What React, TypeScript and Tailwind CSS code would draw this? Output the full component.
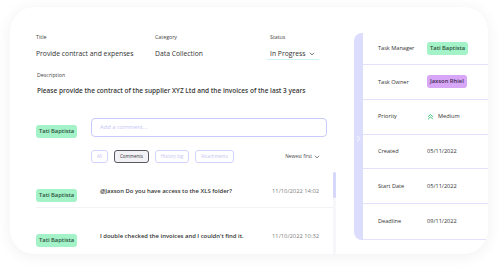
import React from "react";

const Badge = ({ name, tone }: { name: string; tone: "green" | "purple" }) => (
  <span
    className={`inline-flex items-center justify-center h-[13px] px-[3px] rounded-[3px] text-[5.8px] font-semibold whitespace-nowrap ${
      tone === "green" ? "bg-[#a4f2c7] text-[#2d5140]" : "bg-[#d7a6f6] text-[#3f2a52]"
    }`}
  >
    {name}
  </span>
);

const ChevronDown = ({ size = 6, color = "#555" }: { size?: number; color?: string }) => (
  <svg width={size} height={size} viewBox="0 0 10 10" fill="none">
    <polyline points="2,3.5 5,6.5 8,3.5" stroke={color} strokeWidth="1.3" strokeLinecap="round" strokeLinejoin="round" />
  </svg>
);

const comments = [
  { text: "@Jaxson Do you have access to the XLS folder?", date: "11/10/2022 14:02" },
  { text: "I double checked the invoices and I couldn't find it.", date: "11/10/2022 10:32" },
];

const details = [
  { label: "Task Manager", h: "h-[32px]", value: <Badge name="Tati Baptista" tone="green" /> },
  { label: "Task Owner", h: "h-[35px]", value: <Badge name="Jaxson Rhiel" tone="purple" /> },
  {
    label: "Priority",
    h: "h-[35px]",
    value: (
      <span className="flex items-center gap-[4px]">
        <svg width="7" height="7" viewBox="0 0 10 10" fill="none">
          <polyline points="2,5 5,2 8,5" stroke="#35c27a" strokeWidth="1.4" strokeLinecap="round" strokeLinejoin="round" />
          <polyline points="2,8.5 5,5.5 8,8.5" stroke="#35c27a" strokeWidth="1.4" strokeLinecap="round" strokeLinejoin="round" />
        </svg>
        <span>Medium</span>
      </span>
    ),
  },
  { label: "Created", h: "h-[35px]", value: "05/11/2022" },
  { label: "Start Date", h: "h-[35px]", value: "05/11/2022" },
  { label: "Deadline", h: "h-[35px]", value: "09/11/2022" },
];

export default function App() {
  return (
    <div
      className="w-[499px] h-[268px] bg-white pt-[7px] pl-[10px] text-[#333]"
      style={{ fontFamily: "'Open Sans', 'Noto Sans', sans-serif" }}
    >
      <div className="w-[478px] h-[247px] rounded-[24px] bg-white shadow-[0_2px_14px_rgba(60,60,90,0.08)] flex overflow-hidden">
        {/* Left: task info + comments */}
        <div className="w-[344px] pl-[26px] pt-[27px] flex flex-col">
          <div className="flex">
            <div className="w-[119px]">
              <div className="text-[5.3px] leading-[7px] text-[#444]">Title</div>
              <div className="mt-[8px] text-[6.8px] leading-[9px]">Provide contract and expenses</div>
            </div>
            <div className="w-[115px]">
              <div className="text-[5.3px] leading-[7px] text-[#444]">Category</div>
              <div className="mt-[8px] text-[6.8px] leading-[9px]">Data Collection</div>
            </div>
            <div>
              <div className="text-[5.3px] leading-[7px] text-[#444]">Status</div>
              <div className="mt-[8px] -ml-[3px] w-[52px] pl-[3px] pr-[4px] flex items-center justify-between border-b border-[#cdf1f6] pb-[1px]">
                <span className="text-[6.8px] leading-[9px]">In Progress</span>
                <ChevronDown size={6} color="#444" />
              </div>
            </div>
          </div>

          <div className="mt-[12px] pl-[1px]">
            <div className="text-[5.3px] leading-[7px] text-[#444]">Description</div>
            <div className="mt-[7px] text-[6.5px] leading-[9px] font-semibold text-[#3a3a3a] whitespace-nowrap">
              Please provide the contract of the supplier XYZ Ltd and the invoices of the last 3 years
            </div>
          </div>

          <div className="mt-[20px] flex items-center">
            <div className="w-[55px]">
              <Badge name="Tati Baptista" tone="green" />
            </div>
            <div className="w-[236px] h-[19px] rounded-[4px] border border-[#c9cafc] flex items-center pl-[8px] text-[5.8px] text-[#c3c4f7]">
              Add a comment...
            </div>
          </div>

          <div className="mt-[11px] ml-[55px] w-[229px] flex items-center justify-between">
            <div className="flex items-center gap-[6px] text-[4.5px]">
              <span className="h-[13px] w-[17px] flex items-center justify-center rounded-[3px] border border-[#d3d4fc] text-[#c3c4f0]">All</span>
              <span className="h-[13px] w-[35px] flex items-center justify-center rounded-[3px] border-[1.5px] border-[#58585e] bg-[#f1f1f6] text-[#333]">Comments</span>
              <span className="h-[13px] w-[34px] flex items-center justify-center rounded-[3px] border border-[#d3d4fc] text-[#c3c4f0]">History log</span>
              <span className="h-[13px] w-[39px] flex items-center justify-center rounded-[3px] border border-[#d3d4fc] text-[#c3c4f0]">Attachments</span>
            </div>
            <div className="flex items-center gap-[2px] text-[4.8px] text-[#444]">
              <span>Newest first</span>
              <ChevronDown size={6} color="#555" />
            </div>
          </div>

          <div className="mt-[9px] flex w-[300px] h-[90px]">
            <div className="w-[297px]">
              {comments.map((c, i) => (
                <div
                  key={i}
                  className={`flex items-center h-[36px] ${i === 0 ? "border-b border-[#f2f2f7] pt-[3px]" : "pt-[20px]"}`}
                >
                  <div className="w-[64px]">
                    <Badge name="Tati Baptista" tone="green" />
                  </div>
                  <div className="flex-1 text-[5.9px] font-semibold text-[#333] whitespace-nowrap">{c.text}</div>
                  <div className="w-[61px] text-[5.8px] text-[#808080]">{c.date}</div>
                </div>
              ))}
            </div>
            <div className="w-[3px] bg-[#f7f7fa] rounded-full">
              <div className="h-[26px] w-[3px] rounded-full bg-[#d6d7fb]" />
            </div>
          </div>
        </div>

        {/* Right: detail panel */}
        <div className="mt-[26px] w-[134px] h-[207px] flex rounded-l-[8px] overflow-hidden">
          <div className="w-[9px] bg-[#dcdcfd] flex items-center justify-center pt-[3px]">
            <svg width="5" height="7" viewBox="0 0 5 8" fill="none">
              <polyline points="1,1 4,4 1,7" stroke="#ffffff" strokeWidth="1.1" strokeLinecap="round" strokeLinejoin="round" />
            </svg>
          </div>
          <div className="flex-1 flex flex-col border-b border-[#e2e2fd]">
            {details.map((d, i) => (
              <div
                key={d.label}
                className={`${d.h} flex items-center pl-[15px] ${i < details.length - 1 ? "border-b border-[#e2e2fd]" : ""}`}
              >
                <span className="w-[49px] text-[5.6px] text-[#333]">{d.label}</span>
                <span className="text-[5.6px] text-[#333]">{d.value}</span>
              </div>
            ))}
          </div>
        </div>
      </div>
    </div>
  );
}
